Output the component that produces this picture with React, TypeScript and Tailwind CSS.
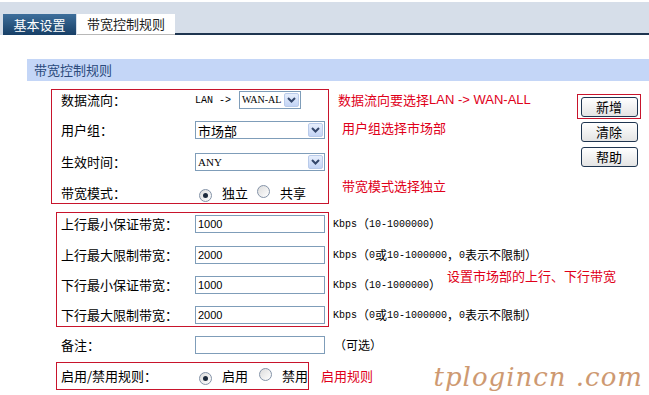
import React from "react";

const CJK = "font-['Noto_Sans_CJK_SC',sans-serif]";

function Mixed({ text }: { text: string }) {
  const parts = text.match(/[\x00-\x7f]+|[^\x00-\x7f]+/g) || [];
  return (
    <>
      {parts.map((p, i) =>
        /^[\x00-\x7f]/.test(p) ? (
          <span key={i} className="font-['Liberation_Mono',monospace] text-[10px]">
            {p}
          </span>
        ) : (
          <span key={i} className="text-[12px]">
            {p}
          </span>
        )
      )}
    </>
  );
}

function Radio({ checked }: { checked?: boolean }) {
  return (
    <span className="inline-flex h-[13px] w-[13px] shrink-0 items-center justify-center rounded-full border border-[#8493a8] bg-gradient-to-br from-[#dcdcdc] to-white">
      {checked && <span className="h-[5px] w-[5px] rounded-full bg-[#1c2a3c]" />}
    </span>
  );
}

function Chevron() {
  return (
    <svg width="9" height="6" viewBox="0 0 9 6">
      <path d="M1 1 L4.5 4.5 L8 1" fill="none" stroke="#34476b" strokeWidth="2" />
    </svg>
  );
}

function Select({ value, className }: { value: string; className: string }) {
  return (
    <div className={`flex h-[18px] items-stretch border border-[#7f9db9] bg-white ${className}`}>
      <span className="flex min-w-0 flex-1 items-center overflow-hidden whitespace-nowrap pl-[2px] leading-none text-black">
        {value}
      </span>
      <span className="m-[1px] flex w-[15px] shrink-0 items-center justify-center rounded-[2px] border border-[#b9cbea] bg-gradient-to-b from-[#e6eefc] to-[#c3d4f5]">
        <Chevron />
      </span>
    </div>
  );
}

function Input({ value }: { value?: string }) {
  return (
    <div className="flex h-[18px] w-[130px] items-center border border-[#7f9db9] bg-white pl-[2px] font-['Liberation_Sans',sans-serif] text-[11px] text-black">
      {value}
    </div>
  );
}

function Btn({ label }: { label: string }) {
  return (
    <div className={`flex h-[20px] w-[57px] items-center justify-center rounded-[3px] border border-[#1f3550] bg-gradient-to-b from-white to-[#e4e4e4] text-[13px] text-black ${CJK}`}>
      {label}
    </div>
  );
}

const bwRows = [
  { label: "上行最小保证带宽：", value: "1000", hint: "Kbps（10-1000000）" },
  { label: "上行最大限制带宽：", value: "2000", hint: "Kbps（0或10-1000000，0表示不限制）" },
  { label: "下行最小保证带宽：", value: "1000", hint: "Kbps（10-1000000）" },
  { label: "下行最大限制带宽：", value: "2000", hint: "Kbps（0或10-1000000，0表示不限制）" },
];
const bwGaps = ["mt-0", "mt-[11px]", "mt-[10px]", "mt-[10px]"];

export default function App() {
  return (
    <div className={`relative h-[395px] w-[649px] overflow-hidden bg-white ${CJK} text-[13px] text-black`}>
      {/* tab bar */}
      <div className="pt-[2px]">
        <div className="flex h-[33px] items-end bg-[#d6dee9] pl-[3px]">
          <div className="flex h-[21px] w-[73px] items-center justify-center bg-gradient-to-b from-[#3e6f9c] to-[#173f66] text-[13px] text-white">
            基本设置
          </div>
          <div className="ml-[1px] flex h-[21px] w-[98px] items-center justify-center border-b border-[#b8b8b8] bg-white text-[13px] text-[#222]">
            带宽控制规则
          </div>
          <div className="h-[2px] flex-1 bg-[#1e3550]" />
        </div>
      </div>

      {/* section header */}
      <div className="ml-[27px] mt-[24px] flex h-[22px] items-center bg-[#c4d6f7] pl-[7px] text-[13px] text-[#2b4a7c]">
        带宽控制规则
      </div>

      {/* group 1 */}
      <div className="mt-[8px] flex">
        <div className="ml-[51px] flex w-[278px] flex-col border border-[#c8142c] pl-[9px]">
          <div className="flex h-[20px] items-center">
            <span className="w-[134px]">数据流向：</span>
            <span className="font-['Liberation_Mono',monospace] text-[10px]">LAN -&gt;</span>
            <Select value="WAN-AL" className="ml-[8px] w-[62px] font-['Liberation_Serif',serif] text-[10px]" />
          </div>
          <div className="mt-[10px] flex h-[20px] items-center">
            <span className="w-[134px]">用户组：</span>
            <Select value="市场部" className="w-[130px] text-[13px]" />
          </div>
          <div className="mt-[12px] flex h-[20px] items-center">
            <span className="w-[134px]">生效时间：</span>
            <Select value="ANY" className="w-[130px] font-['Liberation_Serif',serif] text-[11px]" />
          </div>
          <div className="mt-[11px] flex h-[20px] items-center">
            <span className="w-[134px]">带宽模式：</span>
            <span className="ml-[4px]"><Radio checked /></span>
            <span className="ml-[10px]">独立</span>
            <span className="ml-[9px]"><Radio /></span>
            <span className="ml-[10px]">共享</span>
          </div>
        </div>

        <div className="ml-[9px] flex flex-col text-[13px] text-[#e0001a]">
          <div className="mt-[1px] flex h-[20px] items-center">
            数据流向要选择<span className="font-['Liberation_Sans',sans-serif]">LAN -&gt; WAN-ALL</span>
          </div>
          <div className="ml-[4px] mt-[8px] flex h-[20px] items-center">用户组选择市场部</div>
          <div className="ml-[4px] mt-[38px] flex h-[20px] items-center">带宽模式选择独立</div>
        </div>

        <div className="ml-auto mr-[8px] mt-[5px] flex w-[64px] flex-col items-center">
          <div className="flex h-[25px] w-[64px] items-center justify-center border border-[#c8142c]">
            <Btn label="新增" />
          </div>
          <div className="mt-[3px]"><Btn label="清除" /></div>
          <div className="mt-[5px]"><Btn label="帮助" /></div>
        </div>
      </div>

      {/* group 2 */}
      <div className="relative mt-[8px] flex">
        <div className="ml-[56px] flex w-[273px] flex-col border border-[#c8142c] pb-[1px] pl-[4px] pt-[1px]">
          {bwRows.map((r, i) => (
            <div key={r.label} className={`flex h-[20px] items-center ${bwGaps[i]}`}>
              <span className="w-[134px]">{r.label}</span>
              <Input value={r.value} />
            </div>
          ))}
        </div>
        <div className="ml-[4px] flex flex-col pt-[2px]">
          {bwRows.map((r, i) => (
            <div key={r.label} className={`flex h-[20px] items-center whitespace-nowrap ${bwGaps[i]}`}>
              <Mixed text={r.hint} />
            </div>
          ))}
        </div>
        <div className="absolute left-[447px] top-[55px] text-[13px] leading-[18px] text-[#e0001a]">
          设置市场部的上行、下行带宽
        </div>
      </div>

      {/* remark */}
      <div className="mt-[8px] flex h-[20px] items-center pl-[61px]">
        <span className="w-[134px]">备注：</span>
        <Input />
        <span className="ml-[9px] text-[12px]">（可选）</span>
      </div>

      {/* group 3 */}
      <div className="mt-[7px] flex items-center">
        <div className="ml-[56px] flex h-[28px] w-[253px] items-center border border-[#c8142c] pl-[4px]">
          <span className="w-[134px]">启用/禁用规则：</span>
          <span className="ml-[4px]"><Radio checked /></span>
          <span className="ml-[10px]">启用</span>
          <span className="ml-[11px]"><Radio /></span>
          <span className="ml-[10px]">禁用</span>
        </div>
        <span className="ml-[12px] text-[13px] text-[#e0001a]">启用规则</span>
      </div>

      {/* watermark */}
      <div className="absolute right-[6px] top-[358px] font-['DejaVu_Serif',serif] text-[26px] italic tracking-[1px] text-[#c98f62] opacity-90">
        tplogincn .com
      </div>
    </div>
  );
}
